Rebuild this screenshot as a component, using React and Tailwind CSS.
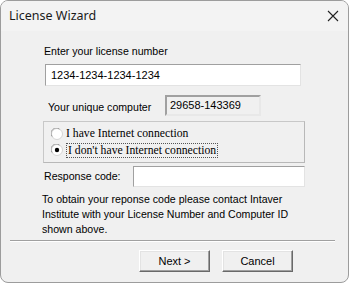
import React from "react";

const sans = { fontFamily: '"Liberation Sans", Arial, sans-serif' };

function Radio({ checked }) {
  return (
    <svg width="12" height="12" viewBox="0 0 12 12" className="shrink-0">
      <circle cx="6" cy="6" r="5.5" fill="#ffffff" stroke="#d4d4d4" />
      <path d="M1.2 8.5 A5.2 5.2 0 0 1 8.5 1.2" fill="none" stroke="#9a9a9a" strokeWidth="1" />
      {checked && <circle cx="6" cy="6" r="2.2" fill="#000000" />}
    </svg>
  );
}

export default function App() {
  return (
    <div className="w-[349px] h-[283px] bg-white">
      <div className="w-[349px] h-[283px] rounded-[8px] border border-[#9c9c9c] bg-[#f0f0f0] overflow-hidden flex flex-col" style={sans}>
        <div className="h-[30px] shrink-0 bg-[#f3f3f3] flex items-center justify-between pl-[8px] pr-[9px]">
          <span className="text-[12.5px] text-[#1a1a1a]" style={{ fontFamily: '"Noto Sans", "Open Sans", sans-serif' }}>License Wizard</span>
          <svg width="12" height="12" viewBox="0 0 12 12">
            <path d="M1 1 L11 11 M11 1 L1 11" stroke="#222" strokeWidth="1.1" />
          </svg>
        </div>
        <div className="flex flex-col text-[10.6px] text-[#000] leading-[13px]">
          <div className="mt-[14px] ml-[43px]">Enter your license number</div>
          <div className="mt-[6px] ml-[44px] w-[256px] h-[22px] bg-white border border-t-[#a0a0a0] border-l-[#a0a0a0] border-r-[#e3e3e3] border-b-[#e3e3e3] flex items-center pl-[5px] text-[11px]">
            1234-1234-1234-1234
          </div>
          <div className="mt-[9px] ml-[47px] flex items-start">
            <span className="mt-[6px] w-[117px]">Your unique computer</span>
            <div className="w-[96px] h-[21px] border-2 border-t-[#a0a0a0] border-l-[#a0a0a0] border-r-[#e8e8e8] border-b-[#e8e8e8] pl-[3px] pt-[2px] text-[11px]">
              29658-143369
            </div>
          </div>
          <div className="mt-[5px] ml-[42px] w-[262px] h-[42px] border border-t-[#c8c8c8] border-l-[#c8c8c8] border-r-[#b8b8b8] border-b-[#b8b8b8] flex flex-col pl-[7px]" style={{ fontFamily: '"Liberation Serif", "Times New Roman", serif', fontSize: '11.7px' }}>
            <div className="mt-[4px] flex items-center h-[15px]">
              <Radio />
              <span className="ml-[3px]">I have Internet connection</span>
            </div>
            <div className="mt-[1px] flex items-center h-[16px]">
              <Radio checked />
              <span className="ml-[3px] px-[1px] border border-dotted border-[#555]">I don't have Internet connection</span>
            </div>
          </div>
          <div className="mt-[3px] ml-[43px] flex items-center">
            <span className="w-[89px]">Response code:</span>
            <div className="w-[172px] h-[21px] bg-white border border-t-[#a0a0a0] border-l-[#a0a0a0] border-r-[#e3e3e3] border-b-[#e3e3e3]"></div>
          </div>
          <div className="mt-[5px] ml-[41px] w-[260px] leading-[15px]">
            To obtain your reponse code please contact Intaver Institute with your License Number and Computer ID shown above.
          </div>
          <div className="mt-[3px] ml-[9px] w-[325px] h-[2px] border-t border-t-[#a0a0a0] border-b border-b-white"></div>
          <div className="mt-[8px] flex justify-end pr-[55px] gap-[12px]">
            <button className="w-[71px] h-[22px] bg-[#f0f0f0] border border-t-white border-l-white border-r-[#696969] border-b-[#696969] shadow-[inset_-1px_-1px_0_#a0a0a0,inset_1px_1px_0_#e3e3e3] text-[11px]">Next &gt;</button>
            <button className="w-[71px] h-[22px] bg-[#f0f0f0] border border-t-white border-l-white border-r-[#696969] border-b-[#696969] shadow-[inset_-1px_-1px_0_#a0a0a0,inset_1px_1px_0_#e3e3e3] text-[11px]">Cancel</button>
          </div>
        </div>
      </div>
    </div>
  );
}
